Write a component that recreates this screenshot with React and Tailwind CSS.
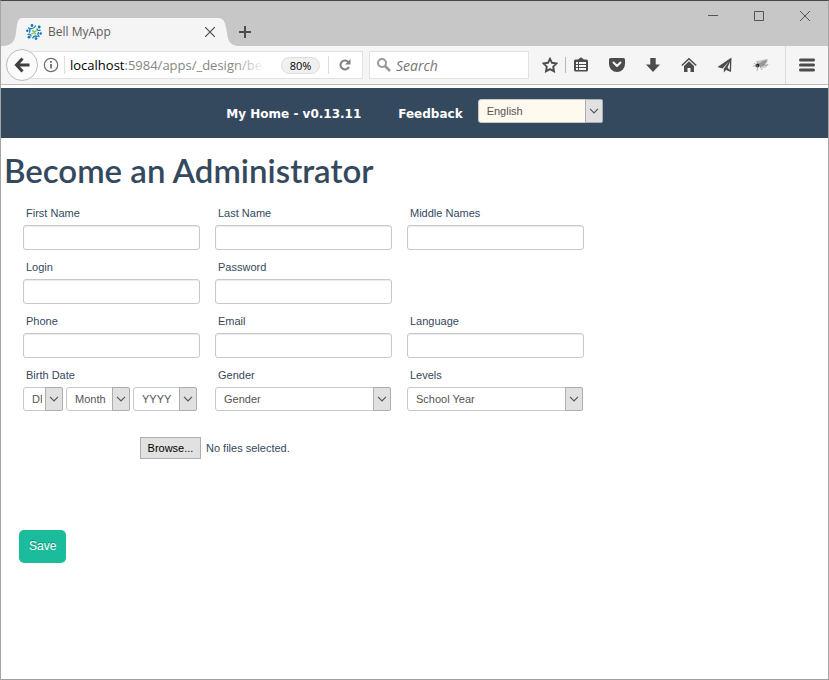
import React from "react";

const field =
  "block h-[25px] w-full rounded-[3px] border border-[#c8c8c8] bg-white px-2 text-[11px] text-[#444] shadow-[inset_0_1px_1px_rgba(0,0,0,0.08)] outline-none";

function Select({ id, label, value, className = "", tone = "bg-white", pad = "pl-2 pr-5" }) {
  return (
    <div className={`relative h-[24px] ${className}`}>
      <select
        id={id}
        aria-label={label}
        className={`block h-full w-full appearance-none rounded-[3px] border border-[#c8c8c8] text-[11px] text-[#555] outline-none ${tone} ${pad}`}
      >
        <option>{value}</option>
      </select>
      <span className="pointer-events-none absolute inset-y-0 right-0 flex w-[18px] items-center justify-center rounded-r-[2px] border border-[#adadad] bg-[#e1e1e1]">
        <svg width="10" height="6" viewBox="0 0 10 6" fill="none" stroke="#555" strokeWidth="1.2">
          <path d="M1 .8 5 4.8 9 .8" />
        </svg>
      </span>
    </div>
  );
}

function Field({ id, label, children, className = "" }) {
  return (
    <div className={className}>
      <label htmlFor={id} className="block h-[19px] pl-[3px] text-[11px] leading-[14px] text-[#34495e]">
        {label}
      </label>
      {children || <input id={id} type={id === "password" ? "password" : "text"} className={field} />}
    </div>
  );
}

function Favicon() {
  return (
    <svg width="16" height="16" viewBox="0 0 16 16" fill="none" strokeLinecap="round">
      <g fill="#1173b4">
        <circle cx="6" cy="1.500" r="1.400" />
        <circle cx="13.200" cy="3" r="1.400" />
        <circle cx="14.700" cy="9.500" r="1.200" />
        <circle cx="10" cy="14.600" r="1.300" />
        <circle cx="3" cy="13.200" r="1.400" />
        <circle cx="1.300" cy="6.800" r="1.200" />
      </g>
      <g stroke="#1b83bf" strokeWidth="1.300">
        <path d="M4.500 4.300c1.800.6 3.700 0 5-2.300M11 4.800c-.1 1.500 1.200 2 3.200 1.400M12.500 8.500c-1 1.200-.8 2.600.6 4M11.300 12.500c-1.700-1-3.200-.6-4.500 1.400M5 12c0-1.500-1-2-3-1.600M3.500 8.200c1-1.300.6-2.700-.8-4.200" />
      </g>
      <path d="M6 9.600 10 7M6.800 6.800l2.700 3" stroke="#7cc142" strokeWidth="1.500" />
    </svg>
  );
}

function TitleBar() {
  return (
    <div className="flex h-[45px] items-end justify-between bg-[#c7c7c7]">
      <div className="flex items-end pl-[3px]">
        <svg width="18" height="28" viewBox="0 0 18 28" fill="#f5f5f5">
          <path d="M0 28C8 27 11 23 12 15 13 5 14 0 18 0V28Z" />
        </svg>
        <div className="flex h-[28px] w-[196px] items-center bg-[#f5f5f5] pl-[4px] text-[#5c5c5c]">
          <Favicon />
          <span className="grow pl-[6px] font-['Open_Sans','Noto_Sans',sans-serif] text-[12px] leading-4">Bell MyApp</span>
          <button aria-label="Close tab" className="mr-[3px]">
            <svg width="10" height="10" viewBox="0 0 10 10" stroke="#4c4c4c" strokeWidth="1.2">
              <path d="M0 0 10 10M10 0 0 10" />
            </svg>
          </button>
        </div>
        <svg width="20" height="28" viewBox="0 0 22 28" preserveAspectRatio="none" fill="#f5f5f5">
          <path d="M22 28C13 27 11 23 10 15 8 5 7 0 0 0V28Z" />
        </svg>
        <button aria-label="New tab" className="mb-[8px] ml-px">
          <svg width="12" height="12" viewBox="0 0 12 12" stroke="#4c4c4c" strokeWidth="2">
            <path d="M6 0V12M0 6H12" />
          </svg>
        </button>
      </div>
      <div className="flex h-full items-start gap-[36px] pt-[10px] pr-[18px]">
        <button aria-label="Minimize">
          <svg width="10" height="10" viewBox="0 0 10 10" stroke="#555"><path d="M0 4.500H10" /></svg>
        </button>
        <button aria-label="Maximize">
          <svg width="10" height="10" viewBox="0 0 10 10" stroke="#555" fill="none"><path d="M.5.500H9.500V9.500H.5Z" /></svg>
        </button>
        <button aria-label="Close">
          <svg width="10" height="10" viewBox="0 0 10 10" stroke="#555"><path d="M0 0 10 10M10 0 0 10" /></svg>
        </button>
      </div>
    </div>
  );
}

const tools = [
  ["Show bookmarks", <g key="a"><path fill="#4c4c4c" d="M5 2.500 8 .3l3 2.200h2.500A1.500 1.500 0 0 1 15 4v9a1.500 1.500 0 0 1-1.500 1.500h-11A1.500 1.500 0 0 1 1 13V4a1.500 1.500 0 0 1 1.500-1.500Z" /><path fill="#f5f5f5" d="M3 5h2v2H3zM6 5h7v2H6zM3 8h2v2H3zM6 8h7v2H6zM3 11h2v2H3zM6 11h7v2H6z" /></g>],
  ["Save to Pocket", <g key="b"><path fill="#4c4c4c" d="M1.500 1h13A1.500 1.500 0 0 1 16 2.500V7a8 8 0 0 1-16 0V2.500A1.500 1.500 0 0 1 1.500 1Z" /><path fill="none" stroke="#f5f5f5" strokeWidth="2" strokeLinecap="round" strokeLinejoin="round" d="M4.500 5.500 8 9 11.500 5.500" /></g>],
  ["Downloads", <path key="c" fill="#4c4c4c" d="M5.300 1h5.400v6.500H15L8 15 1 7.500h4.300Z" />],
  ["Home", <g key="d" fill="#4c4c4c"><path d="M8 4.300 13 9V15H9.500v-4h-3v4H3V9Z" /><path fill="none" stroke="#4c4c4c" strokeWidth="1.500" d="M.8 8.500 8 1.800l7.200 6.700" /></g>],
  ["Share this page", <path key="e" fill="#4c4c4c" fillRule="evenodd" d="M14.500.500.5 10l5 1.500L12 4.500 6.800 11.700V15.500L9 13l5 2ZM10.500 10.500 13 5l-.3 8Z" />],
  ["Fly", <g key="f"><path d="M4 4 9 3l6-1-1 4-5 3-4-1Z" fill="#c4c4c4" /><path d="M8 8l8-1-3 3.500-4 1Z" fill="#ccc" /><path d="M6 6.500l5-3 3 .5-3 4.500-4 2Z" fill="#999" /><circle cx="4.500" cy="8.500" r="2" fill="#222" /><path d="M5 9 1 6M5 9H0M5 9l-1 5M7 9l2 4M6 7 3 4M8 6l6-3M9 8h6" stroke="#888" strokeWidth=".6" /></g>],
];

function Toolbar() {
  return (
    <div className="flex h-[39px] items-center border-b border-[#bcbcbc] bg-[#f5f5f5] font-['Open_Sans','Noto_Sans',sans-serif]">
      <button aria-label="Back" className="relative z-10 ml-[5px] flex size-8 shrink-0 items-center justify-center rounded-full border border-[#bdbdbd] bg-[#fbfbfb]">
        <svg width="16" height="16" viewBox="0 0 16 16" fill="none" stroke="#404040" strokeWidth="3">
          <path d="M8.500 1.500 2.500 8l6 6.500M3 8h12.500" />
        </svg>
      </button>
      <div className="-ml-4 flex h-7 w-[341px] shrink-0 items-center border border-[#e2e2e2] bg-white pl-[20px]">
        <svg width="16" height="16" viewBox="0 0 16 16" fill="none" stroke="#707070" strokeWidth="1.200">
          <circle cx="8" cy="8" r="6.700" />
          <path d="M8 7v4.500M8 4v1.700" strokeWidth="1.800" />
        </svg>
        <span className="ml-[5px] h-[18px] w-px bg-[#ddd]" />
        <span className="relative ml-[5px] w-[195px] text-[13px] leading-5 whitespace-nowrap text-[#858585]">
          <span className="text-black">localhost</span>:5984/apps/_design/be
          <span className="absolute inset-y-0 right-0 w-8 bg-gradient-to-r from-transparent to-white" />
        </span>
        <button className="ml-[16px] h-[17px] w-[39px] rounded-full border border-[#ddd] bg-[#f0f0f0] text-[11px] leading-[15px] text-black">80%</button>
        <span className="ml-[8px] h-[18px] w-px bg-[#ddd]" />
        <button aria-label="Reload" className="ml-[9px]">
          <svg width="14" height="14" viewBox="0 0 14 14">
            <path fill="none" stroke="#808080" strokeWidth="2" d="M10.200 3.700A4.500 4.500 0 1 0 11 9" />
            <path fill="#808080" d="M12.500 1v5.500H7Z" />
          </svg>
        </button>
      </div>
      <div className="ml-[6px] flex h-7 min-w-0 grow items-center border border-[#e2e2e2] bg-white pl-[7px]">
        <svg className="shrink-0" width="14" height="14" viewBox="0 0 14 14" fill="none" stroke="#999" strokeWidth="2">
          <circle cx="5" cy="5" r="4" />
          <path d="M8 8l5 5" strokeWidth="2.600" />
        </svg>
        <input aria-label="Search" placeholder="Search" className="ml-[5px] w-full min-w-0 text-[14px] italic outline-none placeholder:text-[#757575]" />
      </div>
      <button aria-label="Bookmark this page" className="ml-[13px] shrink-0">
        <svg width="16" height="16" viewBox="0 0 16 16" fill="none" stroke="#4c4c4c" strokeWidth="1.900" strokeLinejoin="miter">
          <path d="M8 1.800l2 4 4.500.6-3.300 3.300.8 4.600L8 12.100l-4 2.200.8-4.600L1.500 6.400 6 5.800Z" />
        </svg>
      </button>
      <span className="ml-[7px] h-4 w-px bg-[#bbb]" />
      <div className="flex shrink-0 gap-5 pl-[7px]">
        {tools.map(([name, art]) => (
          <button key={name} aria-label={name}>
            <svg width="16" height="16" viewBox="0 0 16 16">{art}</svg>
          </button>
        ))}
      </div>
      <span className="ml-[16px] h-full w-px bg-[#dcdcdc]" />
      <button aria-label="Open menu" className="mr-[13px] ml-[13px] shrink-0">
        <svg width="16" height="14" viewBox="0 0 16 14" stroke="#4c4c4c" strokeWidth="3" strokeLinecap="round">
          <path d="M1.500 2h13M1.500 7h13M1.500 12h13" />
        </svg>
      </button>
    </div>
  );
}

export default function App() {
  return (
    <div className="flex min-h-screen flex-col border border-t-[#4a4648] border-r-[#a5a5a5] border-b-[#a0a0a0] border-l-[#a5a5a5] bg-white font-['Liberation_Sans',Arial,sans-serif]">
      <TitleBar />
      <Toolbar />
      <nav className="mt-[3px] flex h-[50px] items-start justify-center bg-[#34495e] font-['DejaVu_Sans',Verdana,sans-serif] text-[12px] font-bold text-white">
        <a href="#home" className="mt-[18px] leading-4">My Home - v0.13.11</a>
        <a href="#feedback" className="mt-[18px] ml-[37px] leading-4">Feedback</a>
        <Select label="Site language" value="English" tone="bg-[#fff9ee]" className="mt-[11px] ml-[15px] w-[125px] font-['Liberation_Sans',Arial,sans-serif] font-normal" />
      </nav>
      <main>
        <h1 className="pt-[10px] pl-[3px] font-['Lato',sans-serif] text-[33px] leading-[44px] font-semibold text-[#34495e]">Become an Administrator</h1>
        <form>
          <div className="grid grid-cols-[repeat(3,177px)] gap-x-[15px] gap-y-[10px] pt-[14px] pl-[22px]">
            <Field id="first" label="First Name" />
            <Field id="last" label="Last Name" />
            <Field id="middle" label="Middle Names" />
            <Field id="login" label="Login" />
            <Field id="password" label="Password" className="col-span-2 w-[177px]" />
            <Field id="phone" label="Phone" />
            <Field id="email" label="Email" />
            <Field id="language" label="Language" />
            <Field id="day" label="Birth Date">
              <div className="flex gap-[3px]">
                <Select id="day" label="Day" value="DD" className="w-[40px]" />
                <Select label="Month" value="Month" className="w-[64px]" />
                <Select label="Year" value="YYYY" className="w-[64px]" />
              </div>
            </Field>
            <Field id="gender" label="Gender">
              <Select id="gender" label="Gender" value="Gender" className="w-[176px]" />
            </Field>
            <Field id="levels" label="Levels">
              <Select id="levels" label="Levels" value="School Year" className="w-[176px]" />
            </Field>
          </div>
          <div className="mt-[26px] flex items-center gap-[5px] pl-[139px] text-[11px]">
            <button type="button" className="h-[22px] w-[61px] border border-[#adadad] bg-[#e1e1e1] text-black">Browse...</button>
            <span className="text-[#34495e]">No files selected.</span>
          </div>
          <button type="button" className="mt-[71px] ml-[18px] h-[33px] rounded-[5px] bg-[#1abc9c] px-[10px] pb-px text-[12px] text-white [text-shadow:0_-1px_0_rgba(0,0,0,0.25)]">Save</button>
        </form>
      </main>
    </div>
  );
}
